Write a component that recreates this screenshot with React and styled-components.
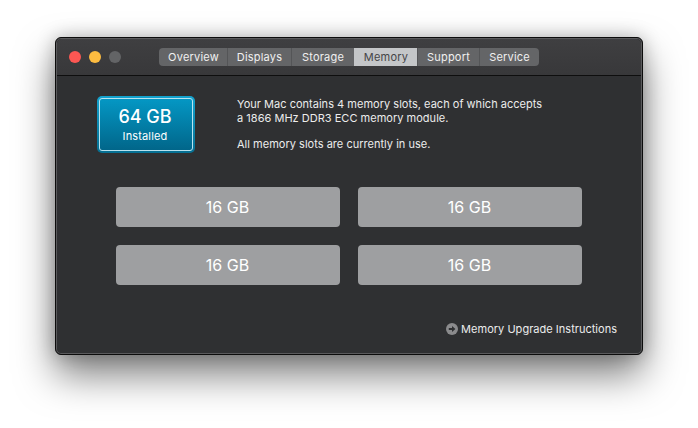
import styled, { createGlobalStyle } from 'styled-components';

const GlobalStyle = createGlobalStyle`
  html, body {
    margin: 0;
    padding: 0;
    background: #fff;
  }
  body {
    font-family: Inter, "Noto Sans", "Liberation Sans", sans-serif;
    overflow: hidden;
  }
`;

const Page = styled.div`
  width: 698px;
  height: 428px;
  padding: 37px 0 0 55px;
  box-sizing: border-box;
`;

const Window = styled.div`
  width: 588px;
  height: 318px;
  box-sizing: border-box;
  display: flex;
  flex-direction: column;
  background: #2f3032;
  border: 1px solid #0c0c0c;
  border-radius: 6px;
  overflow: hidden;
  box-shadow: inset 0 0 0 1px #5a5a5c, 0 20px 38px rgba(0, 0, 0, 0.5), 0 0 18px rgba(0, 0, 0, 0.25);
`;

const TitleBar = styled.div`
  height: 37px;
  flex-shrink: 0;
  box-sizing: border-box;
  display: flex;
  align-items: flex-start;
  padding: 9px 0 0 12px;
  background: linear-gradient(#3f3f41, #38383a);
  border-bottom: 1px solid #0e0e0e;
  margin: 1px 1px 0;
  border-radius: 5px 5px 0 0;
`;

const Lights = styled.div`
  display: flex;
  gap: 8px;
  padding-top: 3px;
  width: 90px;
`;

const Light = styled.span`
  width: 12px;
  height: 12px;
  border-radius: 50%;
  background: ${(p) => p.$color};
`;

const Tabs = styled.div`
  display: flex;
  height: 18px;
  border-radius: 4px;
  overflow: hidden;
  background: #646567;
`;

const Tab = styled.div`
  width: ${(p) => p.$width}px;
  box-sizing: border-box;
  display: flex;
  align-items: center;
  justify-content: center;
  font-size: 11px;
  letter-spacing: 0.2px;
  color: ${(p) => (p.$active ? '#454547' : '#f0f0f0')};
  background: ${(p) => (p.$active ? '#c4c6c8' : 'transparent')};
  border-left: 1px solid ${(p) => (p.$first || p.$active ? 'transparent' : '#545557')};
`;

const Content = styled.div`
  flex: 1;
  display: flex;
  flex-direction: column;
  padding: 20px 24px 0 40px;
  margin: 0 1px 1px;
`;

const Summary = styled.div`
  display: flex;
  gap: 42px;
`;

const Badge = styled.div`
  width: 98px;
  height: 57px;
  box-sizing: border-box;
  border-radius: 5px;
  padding: 2px;
  background: linear-gradient(#14a3cf, #066f92);
`;

const BadgeInner = styled.div`
  height: 100%;
  box-sizing: border-box;
  border: 1px solid #b9e3f0;
  border-radius: 3px;
  background: linear-gradient(#0497c4, #01668a);
  color: #fff;
  display: flex;
  flex-direction: column;
  align-items: center;
  padding: 7px 2px 0 0;
`;

const BadgeSize = styled.div`
  font-size: 18px;
  font-weight: 500;
  line-height: 21px;
`;

const BadgeLabel = styled.div`
  font-size: 11px;
  line-height: 14px;
  letter-spacing: 0.15px;
  margin-top: 2px;
`;

const Description = styled.div`
  padding-top: 1px;
  color: #ececec;
  font-size: 11px;
  line-height: 14px;
  letter-spacing: 0.02px;
`;

const Paragraph = styled.p`
  margin: 0 0 12px;
`;

const Slots = styled.div`
  display: grid;
  grid-template-columns: 224px 224px;
  grid-auto-rows: 40px;
  gap: 18px;
  margin: 24px 0 0 19px;
`;

const Slot = styled.div`
  display: flex;
  align-items: center;
  justify-content: center;
  background: #9e9fa1;
  border-radius: 4px;
  color: #fff;
  font-size: 16px;
  padding-right: 1px;
`;

const UpgradeLink = styled.div`
  margin-top: 37px;
  display: flex;
  align-items: center;
  justify-content: flex-end;
  gap: 3px;
  color: #ececec;
  font-size: 11px;
  line-height: 14px;
  letter-spacing: 0.02px;
`;

const tabs = [
  ['Overview', 68],
  ['Displays', 64],
  ['Storage', 63],
  ['Memory', 63],
  ['Support', 62],
  ['Service', 60],
];

const slots = ['a', 'b', 'c', 'd'];

const App = () => {
  return (
    <Page>
      <GlobalStyle />
      <Window>
        <TitleBar>
          <Lights>
            <Light $color="#fc5753" />
            <Light $color="#fdbc40" />
            <Light $color="#636466" />
          </Lights>
          <Tabs>
            {tabs.map(([name, width], i) => (
              <Tab key={name} $width={width} $first={i === 0} $active={name === 'Memory'}>
                {name}
              </Tab>
            ))}
          </Tabs>
        </TitleBar>
        <Content>
          <Summary>
            <Badge>
              <BadgeInner>
                <BadgeSize>64 GB</BadgeSize>
                <BadgeLabel>Installed</BadgeLabel>
              </BadgeInner>
            </Badge>
            <Description>
              <Paragraph>
                Your Mac contains 4 memory slots, each of which accepts
                <br />
                a 1866 MHz DDR3 ECC memory module.
              </Paragraph>
              <Paragraph>All memory slots are currently in use.</Paragraph>
            </Description>
          </Summary>
          <Slots>
            {slots.map((id) => (
              <Slot key={id}>16 GB</Slot>
            ))}
          </Slots>
          <UpgradeLink>
            <svg width="12" height="12" viewBox="0 0 12 12">
              <circle cx="6" cy="6" r="6" fill="#8b8b8d" />
              <path d="M2.8 4.9H6V2.9L9.4 6 6 9.1V7.1H2.8z" fill="#2f3032" />
            </svg>
            Memory Upgrade Instructions
          </UpgradeLink>
        </Content>
      </Window>
    </Page>
  );
};

export default App;
